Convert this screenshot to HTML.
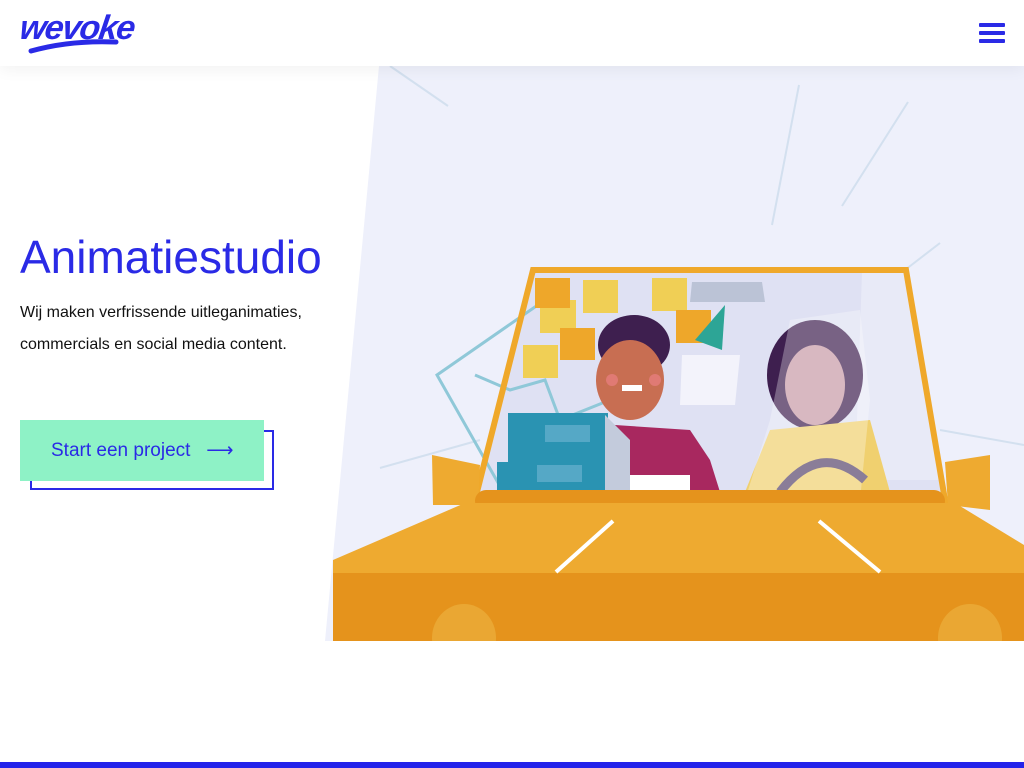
<!DOCTYPE html>
<html><head><meta charset="utf-8"><style>
*{margin:0;padding:0;box-sizing:border-box}
body{width:1024px;height:768px;overflow:hidden;background:#fff;font-family:"Liberation Sans",sans-serif;position:relative}
.hdr{position:absolute;left:0;top:0;width:1024px;height:66px;background:#fff;box-shadow:0 4px 14px rgba(0,0,0,0.05);z-index:5}
.logo{position:absolute;left:20px;top:9px;font:italic bold 34px "Liberation Sans",sans-serif;color:#2a2ae6;letter-spacing:-1.5px;transform:skewX(-8deg)}
.ham{position:absolute;left:979px;top:23px;width:26px}
.ham i{display:block;height:4px;background:#2a2ae6;margin-bottom:4px;border-radius:1px}
h1{position:absolute;left:20px;top:230px;font-weight:normal;font-size:46px;color:#2a2ae6;letter-spacing:0px}
p{position:absolute;left:20px;top:297px;font-size:16px;line-height:32px;color:#111;width:320px}
.bo{position:absolute;left:30px;top:430px;width:244px;height:60px;border:2px solid #2a2ae6}
.bt{position:absolute;left:20px;top:420px;width:244px;height:61px;background:#8ef2c6;color:#2a2ae6;font-size:19px;padding:19px 0 0 31px}
.bar{position:absolute;left:0;top:762px;width:1024px;height:6px;background:#2323ea}
svg{position:absolute;left:0;top:0}
</style></head><body>
<svg width="1024" height="768">
<defs><clipPath id="c"><rect x="0" y="0" width="1024" height="641"/></clipPath></defs>
<g clip-path="url(#c)">
<polygon points="379,66 1024,66 1024,641 325,641" fill="#eef0fb"/>
<g stroke="#d3e0ef" stroke-width="2"><line x1="390" y1="66" x2="448" y2="106"/><line x1="799" y1="85" x2="772" y2="225"/><line x1="908" y1="102" x2="842" y2="206"/><line x1="940" y1="243" x2="905" y2="270"/><line x1="380" y1="468" x2="480" y2="440"/><line x1="940" y1="430" x2="1024" y2="445"/></g>
<polygon points="533,270 906,270 945,500 475,500" fill="#dfe1f3"/>
<polygon points="862,272 906,270 940,480 855,480" fill="#e8eaf7"/>
<polyline points="545,300 437,375 505,495" fill="none" stroke="#8fc8d8" stroke-width="3"/>
<polyline points="475,375 510,390 545,380 560,420 610,400" fill="none" stroke="#8fc8d8" stroke-width="3"/>
<polygon points="682,355 740,355 735,405 680,405" fill="#f3f3fb"/>
<g fill="#f0cf55"><rect x="583" y="280" width="35" height="33"/><rect x="652" y="278" width="35" height="33"/><rect x="540" y="300" width="36" height="33"/><rect x="523" y="345" width="35" height="33"/></g>
<g fill="#eea72a"><rect x="535" y="278" width="35" height="30"/><rect x="560" y="328" width="35" height="32"/><rect x="676" y="310" width="35" height="33"/></g>
<polygon points="692,282 762,282 765,302 690,302" fill="#bbc3d6"/>
<polygon points="725,305 695,340 722,350" fill="#2da596"/>
<ellipse cx="634" cy="345" rx="36" ry="30" fill="#3e1f4f"/>
<polygon points="615,425 690,430 710,460 720,492 615,492" fill="#a8285f"/>
<ellipse cx="630" cy="380" rx="34" ry="40" fill="#c86e52"/>
<circle cx="612" cy="380" r="6" fill="#e07a74"/><circle cx="655" cy="380" r="6" fill="#e07a74"/>
<rect x="622" y="385" width="20" height="6" fill="#fff"/>
<rect x="630" y="475" width="60" height="17" fill="#fff"/>
<rect x="497" y="462" width="110" height="30" fill="#2a93b2"/>
<rect x="508" y="413" width="100" height="50" fill="#2a93b2"/>
<polygon points="605,415 630,440 630,490 605,490" fill="#c3cbdc"/>
<rect x="545" y="425" width="45" height="17" fill="#55a8c6"/><rect x="537" y="465" width="45" height="17" fill="#55a8c6"/>
<ellipse cx="815" cy="375" rx="48" ry="55" fill="#3e1f4f"/>
<polygon points="770,430 870,420 890,492 745,492" fill="#f0d06f"/>
<ellipse cx="815" cy="385" rx="30" ry="40" fill="#c79aa6"/>
<polygon points="790,320 860,310 870,400 860,500 745,500 770,420" fill="#fff" opacity="0.3"/>
<path d="M780 492 Q820 440 865 480" fill="none" stroke="#8a7d98" stroke-width="9"/>
<polygon points="533,270 906,270 945,500 475,500" stroke="#efa82a" stroke-width="6" fill="none"/>
<polygon points="432,455 480,465 478,505 433,505" fill="#eeaa30"/>
<polygon points="945,462 990,455 990,510 948,505" fill="#eeaa30"/>
<rect x="475" y="490" width="470" height="22" rx="11" fill="#e5931c"/>
<polygon points="465,503 955,503 1024,545 1024,573 333,573 333,560" fill="#eeaa30"/>
<rect x="333" y="573" width="691" height="68" fill="#e5931c"/>
<ellipse cx="464" cy="638" rx="32" ry="34" fill="#eaa733"/>
<ellipse cx="970" cy="638" rx="32" ry="34" fill="#eaa733"/>
<g stroke="#fff" stroke-width="4"><line x1="556" y1="572" x2="613" y2="521"/><line x1="819" y1="521" x2="880" y2="572"/></g>
</g>
</svg>
<div class="hdr"><div class="logo">wevoke</div>
<svg width="130" height="66"><path d="M31 51 Q70 40 116 42" stroke="#2a2ae6" stroke-width="5" fill="none" stroke-linecap="round"/></svg>
<div class="ham"><i></i><i></i><i></i></div></div>
<h1>Animatiestudio</h1>
<p>Wij maken verfrissende uitleganimaties, commercials en social media content.</p>
<div class="bo"></div>
<div class="bt">Start een project &nbsp;&nbsp;⟶</div>
<div class="bar"></div>
</body></html>
